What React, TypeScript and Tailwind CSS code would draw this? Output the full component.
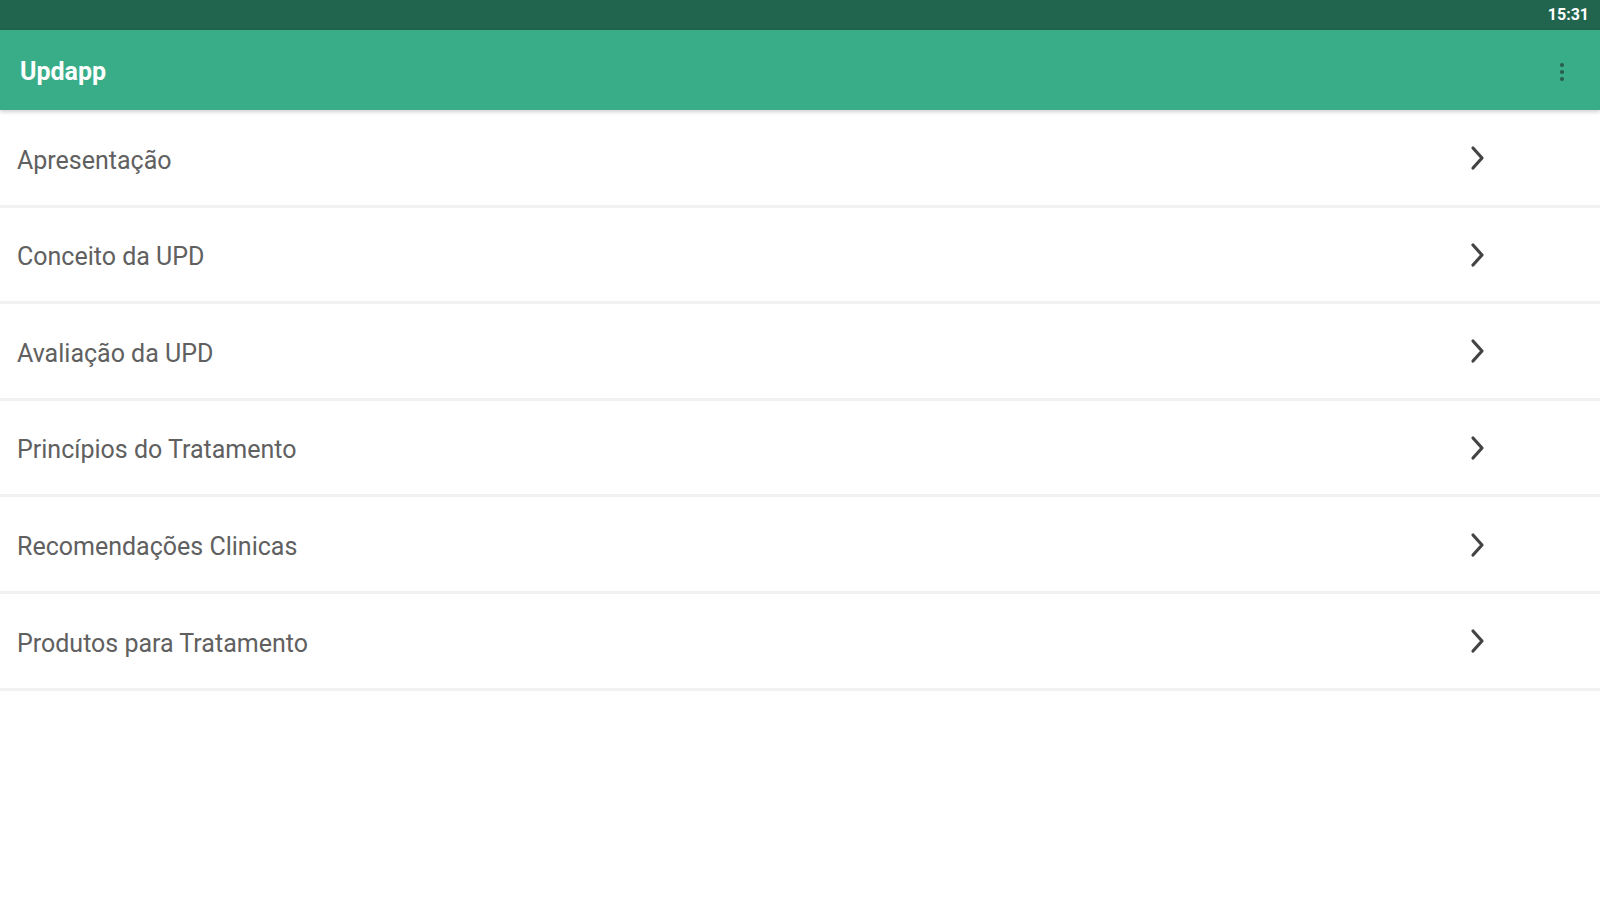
import React from "react";

const items = [
  "Apresentação",
  "Conceito da UPD",
  "Avaliação da UPD",
  "Princípios do Tratamento",
  "Recomendações Clinicas",
  "Produtos para Tratamento",
];

function Chevron() {
  return (
    <svg width="16" height="26" viewBox="0 0 16 26" fill="none" className="mb-[4px]">
      <path d="M3 3 L12 13 L3 23" stroke="#444" strokeWidth="3.2" strokeLinecap="round" strokeLinejoin="round" />
    </svg>
  );
}

export default function App() {
  return (
    <div className="w-[1600px] h-[900px] bg-white flex flex-col" style={{ fontFamily: "Roboto, 'Noto Sans', sans-serif" }}>
      <div className="h-[30px] bg-[#21654f] flex items-center justify-end pr-[11px]">
        <span className="text-white font-bold text-[16px] leading-none">15:31</span>
      </div>
      <div className="h-[80px] bg-[#39ad88] flex items-center justify-between pl-[20px] pr-[36px] pt-[4px] shadow-[0_2px_4px_rgba(0,0,0,0.18)] relative z-10">
        <span className="text-white font-bold text-[25px]">Updapp</span>
        <div className="flex flex-col gap-[3px] items-center">
          <span className="w-[4px] h-[4px] bg-[#2a5a48] rounded-full" />
          <span className="w-[4px] h-[4px] bg-[#2a5a48] rounded-full" />
          <span className="w-[4px] h-[4px] bg-[#2a5a48] rounded-full" />
        </div>
      </div>
      <div className="flex flex-col pt-[1px]">
        {items.map((t) => (
          <div key={t} className="h-[96.6px] flex items-center justify-between pl-[17px] pr-[114px] pt-[5px] border-b-[3px] border-[#f1f1f1]">
            <span className="text-[25px] text-[#606060]">{t}</span>
            <Chevron />
          </div>
        ))}
      </div>
    </div>
  );
}
